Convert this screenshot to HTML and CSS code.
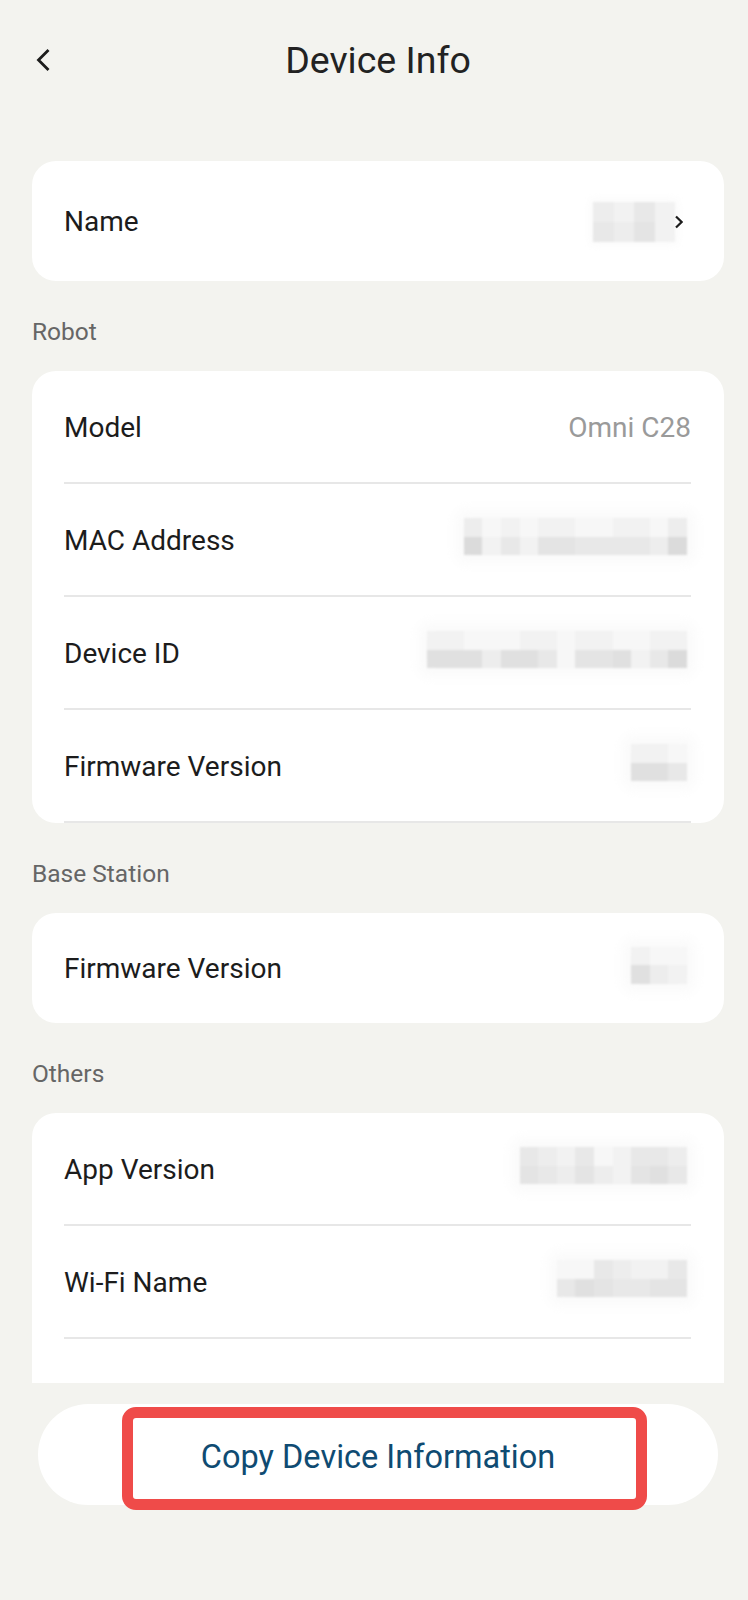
FILE: index.html
```html
<!DOCTYPE html>
<html lang="en">
<head>
<meta charset="utf-8">
<title>Device Info</title>
<link rel="stylesheet" href="styles.css">
</head>
<body>
<div class="page">
  <div class="scroll">
    <header class="topbar">
      <button class="back" aria-label="Back">
        <svg width="24" height="28" viewBox="0 0 24 28"><path d="M16.5 4 L6.5 14 L16.5 24" fill="none" stroke="#1c1c1c" stroke-width="2.8" stroke-linejoin="miter"/></svg>
      </button>
      <h1 class="title">Device Info</h1>
      <span class="spacer"></span>
    </header>

    <section class="card card-name">
      <div class="row">
        <span class="label">Name</span>
        <span class="value-wrap">
          <span class="mosaic big flat">
            <span class="mrow"><span class="px g2"></span><span class="px g1"></span><span class="px g3"></span><span class="px g1"></span></span>
            <span class="mrow"><span class="px g3"></span><span class="px g2"></span><span class="px g4"></span><span class="px g1"></span></span>
          </span>
          <svg class="chev" width="8" height="14" viewBox="0 0 8 14"><path d="M1 1.5 L6.6 7 L1 12.5" fill="none" stroke="#1c1c1c" stroke-width="2.2"/></svg>
        </span>
      </div>
    </section>

    <div class="section-label">Robot</div>
    <section class="card">
      <div class="row">
        <span class="label">Model</span>
        <span class="value">Omni C28</span>
      </div>
      <div class="row">
        <span class="label">MAC Address</span>
        <span class="mosaic">
          <span class="mrow"><span class="px g2"></span><span class="px g0"></span><span class="px g1"></span><span class="px g0"></span><span class="px g1"></span><span class="px g1"></span><span class="px g0"></span><span class="px g0"></span><span class="px g1"></span><span class="px g1"></span><span class="px g0"></span><span class="px g2"></span></span>
          <span class="mrow"><span class="px g6"></span><span class="px g1"></span><span class="px g3"></span><span class="px g1"></span><span class="px g4"></span><span class="px g4"></span><span class="px g3"></span><span class="px g3"></span><span class="px g3"></span><span class="px g3"></span><span class="px g2"></span><span class="px g6"></span></span>
        </span>
      </div>
      <div class="row">
        <span class="label">Device ID</span>
        <span class="mosaic">
          <span class="mrow"><span class="px g1"></span><span class="px g1"></span><span class="px g0"></span><span class="px g0"></span><span class="px g0"></span><span class="px g1"></span><span class="px g1"></span><span class="px g0"></span><span class="px g1"></span><span class="px g1"></span><span class="px g0"></span><span class="px g0"></span><span class="px g1"></span><span class="px g1"></span></span>
          <span class="mrow"><span class="px g5"></span><span class="px g5"></span><span class="px g5"></span><span class="px g2"></span><span class="px g5"></span><span class="px g5"></span><span class="px g3"></span><span class="px g0"></span><span class="px g4"></span><span class="px g4"></span><span class="px g5"></span><span class="px g1"></span><span class="px g3"></span><span class="px g6"></span></span>
        </span>
      </div>
      <div class="row">
        <span class="label">Firmware Version</span>
        <span class="mosaic">
          <span class="mrow"><span class="px g1"></span><span class="px g1"></span><span class="px g0"></span></span>
          <span class="mrow"><span class="px g5"></span><span class="px g5"></span><span class="px g3"></span></span>
        </span>
      </div>
    </section>

    <div class="section-label">Base Station</div>
    <section class="card card-base">
      <div class="row">
        <span class="label">Firmware Version</span>
        <span class="mosaic">
          <span class="mrow"><span class="px g1"></span><span class="px g0"></span><span class="px g0"></span></span>
          <span class="mrow"><span class="px g5"></span><span class="px g2"></span><span class="px g1"></span></span>
        </span>
      </div>
    </section>

    <div class="section-label">Others</div>
    <section class="card">
      <div class="row">
        <span class="label">App Version</span>
        <span class="mosaic">
          <span class="mrow"><span class="px g3"></span><span class="px g2"></span><span class="px g1"></span><span class="px g3"></span><span class="px g0"></span><span class="px g1"></span><span class="px g3"></span><span class="px g3"></span><span class="px g2"></span></span>
          <span class="mrow"><span class="px g4"></span><span class="px g3"></span><span class="px g2"></span><span class="px g4"></span><span class="px g2"></span><span class="px g1"></span><span class="px g4"></span><span class="px g5"></span><span class="px g3"></span></span>
        </span>
      </div>
      <div class="row">
        <span class="label">Wi-Fi Name</span>
        <span class="mosaic">
          <span class="mrow"><span class="px g0"></span><span class="px g0"></span><span class="px g3"></span><span class="px g2"></span><span class="px g1"></span><span class="px g1"></span><span class="px g3"></span></span>
          <span class="mrow"><span class="px g3"></span><span class="px g5"></span><span class="px g4"></span><span class="px g3"></span><span class="px g3"></span><span class="px g4"></span><span class="px g4"></span></span>
        </span>
      </div>
      <div class="row"></div>
    </section>
  </div>

  <footer class="footer">
    <div class="pill">
      <span class="pill-text">Copy Device Information</span>
      <span class="highlight"></span>
    </div>
  </footer>
</div>
</body>
</html>
```

FILE: styles.css
```css
* {
  box-sizing: border-box;
  margin: 0;
  padding: 0;
}

html,
body {
  background: #f3f3ef;
}

body {
  font-family: Roboto, "Noto Sans", "Liberation Sans", sans-serif;
  color: #1c1c1c;
}

.page {
  width: 748px;
  height: 1600px;
  display: flex;
  flex-direction: column;
}

.scroll {
  flex: none;
  height: 1383px;
  overflow: hidden;
  padding: 0 24px 0 32px;
}

/* Header */
.topbar {
  height: 120px;
  display: grid;
  grid-template-columns: 1fr auto 1fr;
  align-items: center;
}

.back {
  justify-self: start;
  display: block;
  width: 24px;
  height: 28px;
  border: 0;
  background: none;
}

.back svg {
  display: block;
}

.title {
  font-size: 37.5px;
  font-weight: 400;
  line-height: 37px;
  color: #222;
}

/* Cards */
.card {
  background: #fff;
  border-radius: 24px;
  overflow: hidden;
}

.card-name {
  margin-top: 41px;
}

.row {
  height: 113px;
  margin: 0 33px 0 32px;
  padding-top: 2px;
  border-bottom: 2px solid #e7e7e7;
  display: flex;
  align-items: center;
  justify-content: space-between;
}

.card-name .row {
  height: 120px;
  border-bottom: 0;
}

.card-base .row {
  height: 110px;
  border-bottom: 0;
}

.label {
  font-size: 28px;
  line-height: 36px;
  color: #1c1c1c;
}

.value {
  font-size: 28px;
  line-height: 36px;
  color: #9a9a9a;
}

.section-label {
  font-size: 24.5px;
  line-height: 32px;
  color: #666;
  padding: 35px 0 23px;
}

/* Redacted mosaic values */
.value-wrap {
  display: flex;
  align-items: center;
}

.chev {
  display: block;
  position: relative;
  z-index: 1;
  margin-right: 8px;
}

.mosaic {
  display: flex;
  flex-direction: column;
  margin: 0 4px 8px 0;
  box-shadow: 0 0 14px 8px #fafafa;
  background: #f9f9f9;
  filter: blur(1.3px);
}

.mosaic.flat {
  margin: 0;
  box-shadow: 0 0 10px 4px #fbfbfb;
}

.mrow {
  display: flex;
}

.px {
  display: block;
  width: 18.6px;
  height: 18.5px;
}

.mosaic.big .px {
  width: 20.5px;
  height: 20px;
}

.g0 { background: #f7f7f7; }
.g1 { background: #f2f2f2; }
.g2 { background: #ededed; }
.g3 { background: #e8e8e8; }
.g4 { background: #e4e4e4; }
.g5 { background: #e0e0e0; }
.g6 { background: #dbdbdb; }

/* Footer button */
.footer {
  flex: 1;
  padding: 21px 30px 0 38px;
}

.pill {
  position: relative;
  height: 101px;
  border-radius: 51px;
  background: #fff;
  display: flex;
  align-items: center;
  justify-content: center;
  padding-top: 4px;
}

.pill-text {
  font-size: 32.5px;
  line-height: 40px;
  color: #0f4b72;
}

.highlight {
  position: absolute;
  left: 84px;
  top: 3px;
  width: 525px;
  height: 103px;
  border: 11px solid #ef4b49;
  border-radius: 14px;
  pointer-events: none;
}
```
